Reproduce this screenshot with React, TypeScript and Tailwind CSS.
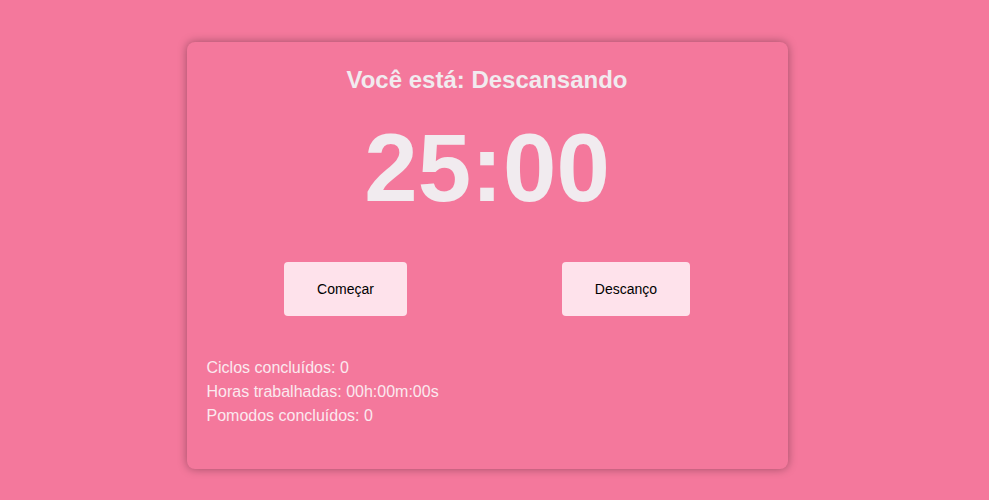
import React, { useState } from "react";

export default function App() {
    const [mode] = useState("Descansando");

    return (
        <div className="min-h-[500px] w-full bg-[#f4789c] pr-[15px] pt-[42px]" style={{ fontFamily: '"Liberation Sans", Arial, sans-serif' }}>
            <div className="mx-auto w-[601px] rounded-lg bg-[#f4789c] px-5 pt-[22px] pb-[41px] shadow-[0_0_10px_rgba(0,0,0,0.35)]">
                <h2 className="text-center text-2xl font-bold text-[#f1ebef]">Você está: {mode}</h2>
                <div className="mt-[17px] text-center text-[96px] leading-[110px] font-bold text-[#f1ebef]">25:00</div>
                <div className="mt-[39px] flex justify-around">
                    <button className="h-[54px] w-[123px] rounded bg-[#fee2eb] text-sm text-black">Começar</button>
                    <button className="h-[54px] w-[128px] rounded bg-[#fee2eb] text-sm text-black">Descanço</button>
                </div>
                <div className="mt-10 text-base leading-6 text-[#fbe9ef]">
                    <p>Ciclos concluídos: 0</p>
                    <p>Horas trabalhadas: 00h:00m:00s</p>
                    <p>Pomodos concluídos: 0</p>
                </div>
            </div>
        </div>
    );
}
